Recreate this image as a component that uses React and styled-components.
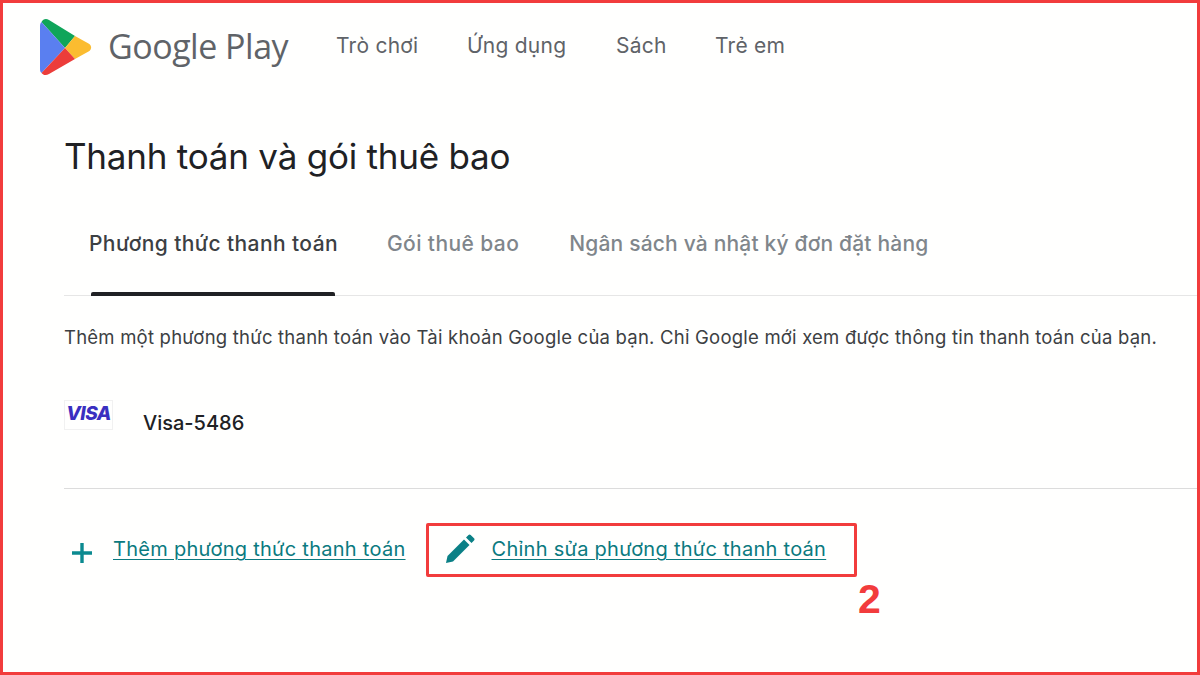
import React from 'react';
import styled, {createGlobalStyle} from 'styled-components'

const GlobalStyle = createGlobalStyle`
  html, body { margin: 0; padding: 0; background: white; }
  body { font-family: "Inter", "Noto Sans", sans-serif; }
`

const Frame = styled.div`
  box-sizing: border-box;
  width: 1200px;
  height: 675px;
  border: 3px solid #f23c3c;
  overflow: hidden;
  background: #fffffe;
`

const Header = styled.header`
  display: flex;
  align-items: center;
  height: 84px;
  padding: 0 0 0 37px;
  margin-top: -1px;
`

const LogoSvg = styled.svg`
  margin-top: 6px;
  flex: none;
`

const LogoText = styled.div`
  font-family: "Open Sans", sans-serif;
  font-size: 34px;
  font-weight: 500;
  letter-spacing: -0.5px;
  color: #5f6368;
  margin: 4px 0 0 16px;
  width: 228px;
`

const Nav = styled.nav`
  display: flex;
  margin-top: 2px;
`

const NavItem = styled.a`
  font-size: 21px;
  letter-spacing: 0.25px;
  color: #5f6368;
  width: ${p => p.$w}px;
`

const Title = styled.h1`
  margin: 0;
  padding: 45px 0 0 61px;
  height: 50px;
  line-height: 50px;
  font-size: 35px;
  font-weight: 400;
  letter-spacing: -0.22px;
  color: #202124;
`

const Tabs = styled.div`
  display: flex;
  margin: 38px 0 0 61px;
  height: 76px;
  border-bottom: 1px solid #e6e6e6;
`

const Tab = styled.div`
  position: relative;
  font-size: 21px;
  font-weight: 500;
  line-height: 24px;
  padding-top: 13px;
  letter-spacing: ${p => p.$track}px;
  margin-left: ${p => p.$left}px;
  color: ${p => (p.$active ? '#3c4043' : '#80868b')};
`

const TabBar = styled.div`
  position: absolute;
  left: 2px;
  right: 3px;
  bottom: -1px;
  height: 4px;
  border-radius: 2px 2px 0 0;
  background: #202124;
`

const Description = styled.p`
  margin: 29px 0 0 61px;
  font-size: 18.5px;
  letter-spacing: 0.22px;
  line-height: 24px;
  white-space: nowrap;
  color: #3c4043;
`

const CardRow = styled.div`
  display: flex;
  align-items: flex-start;
  margin: 51px 0 0 61px;
  height: 88px;
  border-bottom: 1px solid #dcdcdc;
`

const VisaBadge = styled.div`
  box-sizing: border-box;
  width: 49px;
  height: 30px;
  border: 1px solid #f1f1f1;
  font-size: 19px;
  font-weight: 800;
  font-style: italic;
  letter-spacing: -0.6px;
  line-height: 25px;
  text-align: center;
  color: #3a2fc0;
`

const CardName = styled.div`
  margin: 10px 0 0 30px;
  font-size: 20px;
  font-weight: 500;
  line-height: 26px;
  color: #202124;
`

const Actions = styled.div`
  display: flex;
  align-items: center;
  margin-top: 34px;
`

const Action = styled.div`
  box-sizing: border-box;
  display: flex;
  align-items: center;
  height: 54px;
  margin-left: ${p => p.$left}px;
  padding: ${p => (p.$boxed ? '0 28px 2px 15px' : '0 0 2px')};
  border: ${p => (p.$boxed ? '3px solid #f23c3c' : '3px solid transparent')};
  border-radius: 2px;
`

const ActionLink = styled.a`
  margin-left: ${p => p.$left}px;
  font-size: 20px;
  letter-spacing: 0.27px;
  line-height: 24px;
  color: #0b7a80;
  text-decoration: underline;
  text-underline-offset: 3px;
  text-decoration-thickness: 1px;
  white-space: nowrap;
`

const PlusSvg = styled.svg`
  margin-top: 7px;
  flex: none;
`

const StepNumber = styled.div`
  margin: -1px 0 0 855px;
  font-family: "Liberation Sans", sans-serif;
  font-size: 41px;
  font-weight: 700;
  line-height: 46px;
  color: #f23c3c;
`

const PlayLogo = () => (
    <LogoSvg width="52" height="58" viewBox="0 0 52 58">
        <path d="M1.5 4 C3 1 6 0 9 2 L35 18 L25 30 Z" fill="#0fa55a"/>
        <path d="M35 18 L48.5 25.5 C52 27.5 52 31.5 48.5 33.5 L35 41 L25 30 Z" fill="#fbbc30"/>
        <path d="M1.5 4 L25 30 L1.5 55 C0.5 54 0 53 0 51 L0 8 C0 6 0.5 5 1.5 4 Z" fill="#5a7ff0"/>
        <path d="M25 30 L35 41 L9 56 C6 58 3 57 1.5 55 Z" fill="#ec3d3a"/>
    </LogoSvg>
)

const PlusIcon = () => (
    <PlusSvg width="24" height="24" viewBox="0 0 24 24">
        <path d="M12 2 V22 M2 12 H22" stroke="#0b8a90" strokeWidth="3.4" fill="none"/>
    </PlusSvg>
)

const PencilIcon = () => (
    <svg width="32" height="32" viewBox="0 0 32 32">
        <path d="M2 30 L3.5 23 L20 6.5 L25.5 12 L9 28.5 Z" fill="#0b8086"/>
        <path d="M22 4.5 L24.5 2 C25.2 1.3 26 1.3 26.7 2 L30 5.3 C30.7 6 30.7 6.8 30 7.5 L27.5 10 Z" fill="#0b8086"/>
    </svg>
)

const App = () => {
    return (
        <Frame>
            <GlobalStyle/>
            <Header>
                <PlayLogo/>
                <LogoText>Google Play</LogoText>
                <Nav>
                    <NavItem $w={131}>Trò chơi</NavItem>
                    <NavItem $w={149}>Ứng dụng</NavItem>
                    <NavItem $w={99}>Sách</NavItem>
                    <NavItem $w={90}>Trẻ em</NavItem>
                </Nav>
            </Header>
            <Title>Thanh toán và gói thuê bao</Title>
            <Tabs>
                <Tab $left={25} $track={0.4} $active>
                    Phương thức thanh toán
                    <TabBar/>
                </Tab>
                <Tab $left={49} $track={0.4}>Gói thuê bao</Tab>
                <Tab $left={50} $track={0.18}>Ngân sách và nhật ký đơn đặt hàng</Tab>
            </Tabs>
            <Description>
                Thêm một phương thức thanh toán vào Tài khoản Google của bạn. Chỉ Google mới xem được thông tin thanh toán của bạn.
            </Description>
            <CardRow>
                <VisaBadge>VISA</VisaBadge>
                <CardName>Visa-5486</CardName>
            </CardRow>
            <Actions>
                <Action $left={64}>
                    <PlusIcon/>
                    <ActionLink $left={19}>Thêm phương thức thanh toán</ActionLink>
                </Action>
                <Action $left={17} $boxed>
                    <PencilIcon/>
                    <ActionLink $left={16}>Chỉnh sửa phương thức thanh toán</ActionLink>
                </Action>
            </Actions>
            <StepNumber>2</StepNumber>
        </Frame>
    );
};

export default App;
